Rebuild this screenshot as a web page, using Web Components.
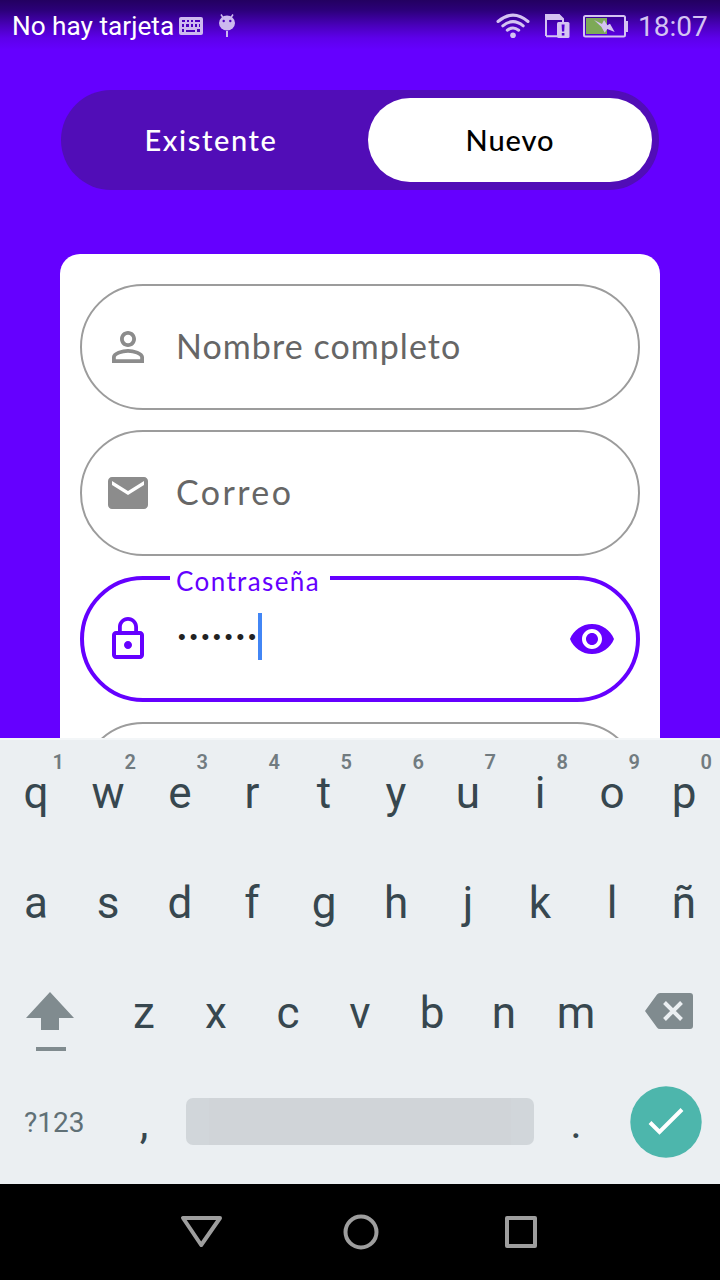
<!DOCTYPE html>
<html lang="es">
<head>
<meta charset="utf-8">
<title>Registro</title>
<style>
html,body{margin:0;height:100%;background:#000}
</style>
</head>
<body>
<phone-screen></phone-screen>
<script>
const define = (name, css, html) => {
  const t = document.createElement('template');
  t.innerHTML = `<style>*{box-sizing:border-box}svg{display:block;flex:none}${css}</style>${html}`;
  customElements.define(name, class extends HTMLElement {
    constructor() {
      super();
      this.attachShadow({ mode: 'open' }).append(t.content.cloneNode(true));
    }
  });
};

define('status-bar', `
:host{display:flex;align-items:center;height:52px;padding:0 12px 0 12px;font:26.2px/52px Roboto,sans-serif;color:#fff;background:linear-gradient(#230060 0,#2b0078 10px,#4a00bd 26px,#5d00ea 38px,#6500ff 50px)}
.carrier{width:167px;white-space:nowrap}
.bug{margin-left:14px}.gap{flex:1}.wifi{margin-right:15px}.sim{margin-right:13px}
.clock{font-size:28px;color:#d4c3f2;margin-left:10px;width:70px;white-space:nowrap;padding-top:1px}
`, `
<span class="carrier">No hay tarjeta</span>
<svg width="24" height="18" viewBox="0 0 24 18"><rect width="24" height="18" rx="2" fill="#cdb9ef"/><path d="M3 3h3v2H3zM8 3h2v2H8zM12 3h2v2h-2zM16 3h5v2h-5zM3 7h2v3H3zM7 7h3v3H7zM12 7h2v3h-2zM16 7h2v3h-2zM20 7h1v3h-1zM3 12h2v3H3zM7 13h9v2H7zM18 12h3v3h-3z" fill="#4b00bd"/></svg>
<svg class="bug" width="20" height="26" viewBox="0 0 20 26"><g fill="#cdb9ef"><ellipse cx="10" cy="10" rx="8" ry="7.5"/><path d="M9 18h2v6H9z"/></g><path d="M4 1.500l2 3M16 1.500l-2 3" stroke="#cdb9ef" stroke-width="1.5"/><circle cx="6.7" cy="8" r="1.2" fill="#4b00bd"/><circle cx="13.3" cy="8" r="1.2" fill="#4b00bd"/></svg>
<span class="gap"></span>
<svg class="wifi" width="34" height="26" viewBox="0 0 34 26"><g fill="none" stroke="#d4c3f2" stroke-width="3" stroke-linecap="round"><path d="M2 8.5Q17-4.3 32 8.5"/><path d="M6.8 12.8Q17 4.5 27.2 12.8"/><path d="M11.3 17.2Q17 12.8 22.7 17.2"/></g><circle cx="17" cy="22.3" r="2.8" fill="#d4c3f2"/></svg>
<svg class="sim" width="25" height="24" viewBox="0 0 25 24"><path d="M1 22V1h13l4 4v4M1 22.2h11" fill="none" stroke="#d4c3f2" stroke-width="2"/><path d="M0 0h14l5 6H0z" fill="#d4c3f2"/><rect x="12" y="8" width="12.5" height="16" rx="1.5" fill="#d4c3f2"/><path d="M16.6 10.5h3l-.4 7h-2.2zM16.8 19h2.6v2.5h-2.6z" fill="#5200d0"/></svg>
<svg width="45" height="23" viewBox="0 0 45 23"><rect x="1" y="1" width="41" height="20.5" rx="1.5" fill="none" stroke="#d4c3f2" stroke-width="2"/><path d="M42 6h3v11h-3z" fill="#d4c3f2"/><path d="M3 3h21v16H3z" fill="#7da957"/><path d="M11 5l8 4 2-4 3.300 5.300 2.700-1.600L31.700 17l-7.400-3-2.600 3.700-3.400-6z" fill="#d4c3f2"/></svg>
<span class="clock">18:07</span>`);

define('tab-option', `
:host{display:block;width:284px;height:84px;border-radius:42px;text-align:center;font:500 29px/83px Lato,sans-serif;color:#fff;letter-spacing:1.6px}
:host([selected]){background:#fff;color:#000;letter-spacing:.9px}
`, `<slot></slot>`);

define('tab-switch', `
:host{display:flex;gap:15px;width:598px;height:100px;padding:8px 7px 8px 8px;border-radius:50px;background:#510db7;margin:38px auto 64px 61px}
`, `<slot></slot>`);

define('field-box', `
:host{display:flex;align-items:center;position:relative;width:560px;height:126px;padding:0 22px;border:2px solid #9c9c9c;border-radius:63px;font:34px/40px Lato,sans-serif;color:#666;fill:#8c8c8c;flex:none}
:host([active]){border:4px solid #6500ff;fill:#6500ff;padding:0 20px;color:#222}
.value{flex:1;margin-left:24px;display:flex;align-items:center;white-space:nowrap}
/* the floating label interrupts the outline */
.label{position:absolute;left:86px;top:-15px;width:160px;height:32px;padding-left:6px;background:#fff;color:#6500ff;font-size:26px;line-height:32px;letter-spacing:var(--label-spacing,0);white-space:nowrap}
:host(:not([active])) .label{display:none}
`, `
<slot name="icon"></slot><span class="value"><slot></slot></span><slot name="end"></slot><span class="label"><slot name="label"></slot></span>`);

define('sign-up-card', `
:host{display:flex;flex-direction:column;gap:20px;width:600px;height:484px;margin-left:60px;padding:30px 20px 0;background:#fff;border-radius:20px 20px 0 0;overflow:hidden}
.hint{padding-bottom:3px}
.dots{font:22px/44px "Liberation Sans",sans-serif;letter-spacing:4px;padding-left:2px;position:relative;top:-2px}
.caret{width:4px;height:47px;background:#4286f5;position:relative;top:-2.5px;margin-left:-2px}
`, `
<field-box><svg slot="icon" width="48" height="48" viewBox="0 0 24 24"><path d="M12 5.9a2.1 2.1 0 1 1 0 4.2 2.1 2.1 0 0 1 0-4.2m0 9c2.97 0 6.1 1.46 6.1 2.1v1.1H5.9V17c0-.64 3.13-2.1 6.1-2.1M12 4C9.79 4 8 5.79 8 8s1.79 4 4 4 4-1.79 4-4-1.79-4-4-4zm0 9c-2.67 0-8 1.34-8 4v3h16v-3c0-2.66-5.33-4-8-4z"/></svg><span class="hint" style="letter-spacing:1.05px">Nombre completo</span></field-box>
<field-box><svg slot="icon" width="48" height="48" viewBox="0 0 24 24"><path d="M20 4H4c-1.1 0-1.99.9-1.99 2L2 18c0 1.1.9 2 2 2h16c1.1 0 2-.9 2-2V6c0-1.1-.9-2-2-2zm0 4l-8 5-8-5V6l8 5 8-5v2z"/></svg><span class="hint" style="letter-spacing:2.4px">Correo</span></field-box>
<field-box active style="--label-spacing:1.4px"><svg slot="icon" width="48" height="48" viewBox="0 0 24 24"><path d="M12 17c1.1 0 2-.9 2-2s-.9-2-2-2-2 .9-2 2 .9 2 2 2zm6-9h-1V6c0-2.76-2.24-5-5-5S7 3.24 7 6v2H6c-1.1 0-2 .9-2 2v10c0 1.1.9 2 2 2h12c1.1 0 2-.9 2-2V10c0-1.1-.9-2-2-2zM8.900 6c0-1.710 1.390-3.100 3.100-3.100s3.100 1.390 3.100 3.100v2H8.900V6zM18 20H6V10h12v10z"/></svg><span slot="label">Contraseña</span><span class="dots">•••••••</span><i class="caret"></i><svg slot="end" width="48" height="48" viewBox="0 0 24 24"><path d="M12 4.500C7 4.500 2.730 7.610 1 12c1.730 4.390 6 7.500 11 7.500s9.270-3.110 11-7.500c-1.730-4.390-6-7.500-11-7.500zM12 17c-2.760 0-5-2.240-5-5s2.240-5 5-5 5 2.240 5 5-2.240 5-5 5zm0-8c-1.660 0-3 1.340-3 3s1.340 3 3 3 3-1.340 3-3-1.340-3-3-3z"/></svg></field-box>
<field-box></field-box>`);

define('key-cap', `
:host{display:flex;justify-content:center;position:relative;width:72px;height:110px;font:44px/110px Roboto,sans-serif;color:#37474f}
.alt{position:absolute;right:8px;top:12px;font:600 20px/24px Roboto,sans-serif;color:#717b80}
`, `<slot></slot><span class="alt"><slot name="alt"></slot></span>`);

const keys = (letters, alts = '') => [...letters].map((c, i) =>
  `<key-cap>${c}${alts[i] ? `<span slot="alt">${alts[i]}</span>` : ''}</key-cap>`).join('');

define('soft-keyboard', `
:host{display:block;height:446px;background:#ebeff2;box-shadow:inset 0 2px #f3f6f8}
.row{display:flex;align-items:center;height:110px}
.side{width:108px;height:110px;display:flex;align-items:center;flex:none}
.mode{font:28px/110px Roboto,sans-serif;color:#607076;padding-left:24px}
.space{width:348px;height:47px;margin:0 6px;border-radius:7px;position:relative;top:-1.5px;background:linear-gradient(90deg,#d1d6da 23px,#d0d4d8 23px 325px,#d1d6da 325px)}
`, `
<div class="row">${keys('qwertyuiop', '1234567890')}</div>
<div class="row">${keys('asdfghjklñ')}</div>
<div class="row"><span class="side" style="padding:17px 0 0 26px"><svg width="48" height="60" viewBox="0 0 48 60" fill="#808b8f"><path d="M24 0l24 26H33v12H15V26H0zM10 55h30v4H10z"/></svg></span>${keys('zxcvbnm')}<span class="side" style="padding:0 0 4px 33px"><svg width="48" height="36" viewBox="0 0 48 36"><path d="M12 1.500Q13 0 15 0H45q3 0 3 3V33q0 3-3 3H15q-2 0-3-1.500L0 18z" fill="#808b8f"/><path d="M19.500 9.500l17 17m0-17l-17 17" stroke="#ebeff2" stroke-width="4"/></svg></span></div>
<div class="row"><span class="side mode">?123</span>${keys(',')}<span class="space"></span><key-cap>.</key-cap><span class="side" style="padding:0 0 2px 18px"><svg width="72" height="72" viewBox="0 0 72 72"><circle cx="36" cy="36" r="35.700" fill="#4db6ac"/><path d="M20 36.500l9.500 9.500L52 23.500" fill="none" stroke="#fff" stroke-width="4"/></svg></span></div>`);

define('nav-bar', `
:host{display:flex;align-items:center;justify-content:center;height:96px;background:#000}
svg{width:160px;height:96px;fill:none;stroke:#9e9e9e;stroke-width:4;stroke-linejoin:round}
`, `
<svg viewBox="0 0 160 96"><path d="M63 34h37L81.200 61z"/></svg>
<svg viewBox="0 0 160 96"><circle cx="81" cy="48" r="15.500"/></svg>
<svg viewBox="0 0 160 96"><path d="M67 34h28v28H67z"/></svg>`);

define('phone-screen', `
:host{display:flex;flex-direction:column;width:720px;height:1280px;overflow:hidden;background:#6500ff}
`, `
<status-bar></status-bar>
<tab-switch><tab-option>Existente</tab-option><tab-option selected>Nuevo</tab-option></tab-switch>
<sign-up-card></sign-up-card>
<soft-keyboard></soft-keyboard>
<nav-bar></nav-bar>`);
</script>
</body>
</html>
